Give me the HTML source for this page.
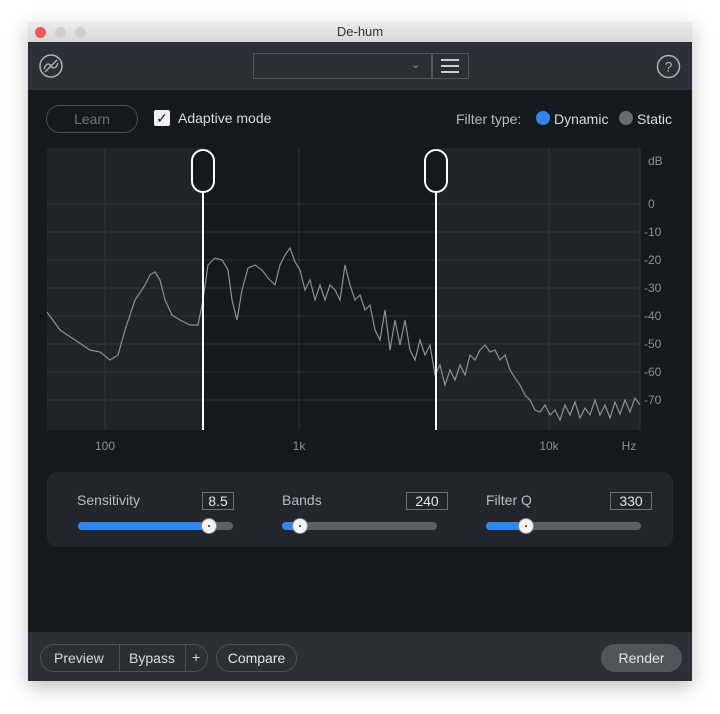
<!DOCTYPE html>
<html><head><meta charset="utf-8"><style>
body{margin:0;width:720px;height:714px;background:#fff;position:relative;font-family:"Liberation Sans",sans-serif;overflow:hidden}
.win{position:absolute;left:28px;top:22px;width:664px;height:659px;background:#15181c;box-shadow:0 6px 18px rgba(0,0,0,.25)}
.title{position:absolute;left:0;top:0;width:664px;height:20px;background:linear-gradient(#ececec,#d8d8d8);text-align:center;font-size:13px;line-height:20px;color:#333}
.dot{position:absolute;top:5px;width:11px;height:11px;border-radius:50%;background:#d0d0d0}
.tb{position:absolute;left:0;top:20px;width:664px;height:48px;background:#2b3038}
.abs{position:absolute}
.t{color:#d8dbe0;font-size:14px}
.bot{position:absolute;left:0;top:610px;width:664px;height:49px;background:#2b3038}
.pill{position:absolute;border:1px solid #4a5058;border-radius:14px;height:26px;color:#e0e3e7;font-size:14px;line-height:26px}
.box{position:absolute;border:1px solid #6a7078;color:#e6e6e6;font-size:14px;text-align:center;height:16px;line-height:16px;top:471px}
.track{position:absolute;height:8px;border-radius:4px;background:#5a6068;top:522px}
.fill{position:absolute;height:8px;border-radius:4px;background:#2f86ec;top:522px}
.knob{position:absolute;width:14px;height:14px;border-radius:50%;background:#f4f4f4;top:519px;box-shadow:0 0 0 1px #888}
.knob:after{content:"";position:absolute;left:6px;top:6px;width:2px;height:2px;background:#555}
</style></head><body>
<div class="win">
<div class="title">De-hum</div>
<div class="dot" style="left:7px;background:#ec5a52"></div><div class="dot" style="left:27px"></div><div class="dot" style="left:47px"></div>
<div class="tb"></div>
</div>
<svg class="abs" style="left:38px;top:53px" width="26" height="26" viewBox="0 0 26 26"><circle cx="13" cy="13" r="11" fill="none" stroke="#aeb3b9" stroke-width="1.5"/><path d="M6 16c2-6 5-6 7-3s5 3 7-3M7 19L19 7" fill="none" stroke="#aeb3b9" stroke-width="1.4"/></svg>
<div class="abs" style="left:253px;top:53px;width:178px;height:24px;border:1px solid #4e545c"></div>
<div class="abs" style="left:411px;top:58px;color:#8a9098;font-size:11px">⌄</div>
<div class="abs" style="left:431px;top:53px;width:36px;height:24px;border:1px solid #4e545c"></div>
<div class="abs" style="left:441px;top:59px;width:18px;height:2px;background:#ccc;box-shadow:0 6px 0 #ccc,0 12px 0 #ccc"></div>
<svg class="abs" style="left:656px;top:54px" width="25" height="25"><circle cx="12.5" cy="12.5" r="11" fill="none" stroke="#aeb3b9" stroke-width="1.5"/><text x="12.5" y="17.5" text-anchor="middle" font-size="14" fill="#aeb3b9" font-family="Liberation Sans">?</text></svg>
<div class="pill" style="left:46px;top:105px;width:90px;text-align:center;color:#6e747c;border-color:#454b53">Learn</div>
<div class="abs" style="left:154px;top:110px;width:16px;height:16px;background:#f0f0f0;border-radius:2px;color:#222;font-size:14px;line-height:16px;text-align:center">✓</div>
<div class="abs t" style="left:178px;top:110px">Adaptive mode</div>
<div class="abs t" style="left:456px;top:111px;color:#b8bcc2">Filter type:</div>
<div class="abs" style="left:536px;top:111px;width:14px;height:14px;border-radius:50%;background:#2f86ec"></div>
<div class="abs t" style="left:554px;top:111px">Dynamic</div>
<div class="abs" style="left:619px;top:111px;width:14px;height:14px;border-radius:50%;background:#666b72"></div>
<div class="abs t" style="left:637px;top:111px">Static</div>
<svg class="abs" style="left:0;top:0" width="720" height="714">
<rect x="47" y="148" width="593" height="282" fill="#20242a"/>
<rect x="203" y="148" width="233" height="282" fill="#15181d"/>
<g stroke="#30353c" stroke-width="1">
<line x1="47" y1="204" x2="640" y2="204"/><line x1="47" y1="232" x2="640" y2="232"/><line x1="47" y1="260" x2="640" y2="260"/><line x1="47" y1="288" x2="640" y2="288"/><line x1="47" y1="316" x2="640" y2="316"/><line x1="47" y1="344" x2="640" y2="344"/><line x1="47" y1="372" x2="640" y2="372"/><line x1="47" y1="400" x2="640" y2="400"/>
<line x1="105" y1="148" x2="105" y2="430"/><line x1="299" y1="148" x2="299" y2="430"/><line x1="549" y1="148" x2="549" y2="430"/><line x1="640" y1="148" x2="640" y2="430"/>
</g>
<polyline fill="none" stroke="#8a9098" stroke-width="1.2" points="47,312 60,330 75,340 90,350 100,352 110,360 118,355 125,330 135,300 145,285 150,275 155,272 160,280 165,300 172,315 180,320 190,325 198,325 203,300 208,265 215,258 222,260 228,270 232,300 237,320 242,290 248,268 255,265 262,270 268,278 275,285 280,265 285,255 290,248 295,262 300,270 305,290 310,280 315,300 320,285 325,300 330,285 335,290 340,300 345,265 350,285 355,300 360,295 365,310 370,305 375,330 380,340 385,310 390,350 395,320 400,345 405,320 410,350 415,360 420,340 425,355 430,345 435,375 440,365 445,385 450,370 455,380 460,365 465,375 470,355 475,360 480,350 485,345 490,352 495,350 500,360 505,355 510,370 515,378 520,385 525,395 530,400 535,410 540,412 545,405 550,415 555,410 560,420 565,405 570,415 575,402 580,418 585,408 590,415 595,400 600,415 605,405 610,418 615,402 620,414 625,400 630,412 635,398 640,405"/>
<line x1="203" y1="190" x2="203" y2="430" stroke="#fff" stroke-width="2"/><line x1="436" y1="190" x2="436" y2="430" stroke="#fff" stroke-width="2"/>
<rect x="192" y="150" width="22" height="42" rx="11" fill="#15181d" stroke="#fff" stroke-width="2"/>
<rect x="425" y="150" width="22" height="42" rx="11" fill="#15181d" stroke="#fff" stroke-width="2"/>
<g fill="#8a9098" font-size="12" font-family="Liberation Sans">
<text x="648" y="165">dB</text><text x="648" y="208">0</text><text x="644" y="236">-10</text><text x="644" y="264">-20</text><text x="644" y="292">-30</text><text x="644" y="320">-40</text><text x="644" y="348">-50</text><text x="644" y="376">-60</text><text x="644" y="404">-70</text>
<text x="105" y="450" text-anchor="middle">100</text><text x="299" y="450" text-anchor="middle">1k</text><text x="549" y="450" text-anchor="middle">10k</text><text x="629" y="450" text-anchor="middle">Hz</text>
</g>
<rect x="47" y="472" width="626" height="75" rx="10" fill="#22262c"/>
</svg>
<div class="abs t" style="left:77px;top:492px;color:#b8bcc2">Sensitivity</div>
<div class="abs t" style="left:282px;top:492px;color:#b8bcc2">Bands</div>
<div class="abs t" style="left:486px;top:492px;color:#b8bcc2">Filter Q</div>
<div class="box" style="left:202px;top:492px;width:30px">8.5</div>
<div class="box" style="left:406px;top:492px;width:40px">240</div>
<div class="box" style="left:610px;top:492px;width:40px">330</div>
<div class="track" style="left:78px;width:155px"></div><div class="fill" style="left:78px;width:132px"></div><div class="knob" style="left:202px"></div>
<div class="track" style="left:282px;width:155px"></div><div class="fill" style="left:282px;width:18px"></div><div class="knob" style="left:293px"></div>
<div class="track" style="left:486px;width:155px"></div><div class="fill" style="left:486px;width:40px"></div><div class="knob" style="left:519px"></div>
<div class="abs" style="left:28px;top:632px;width:664px;height:49px;background:#2b3038"></div>
<div class="pill" style="left:40px;top:644px;width:166px"></div>
<div class="abs t" style="left:54px;top:650px">Preview</div>
<div class="abs" style="left:119px;top:645px;width:1px;height:26px;background:#4a5058"></div>
<div class="abs t" style="left:129px;top:650px">Bypass</div>
<div class="abs" style="left:185px;top:645px;width:1px;height:26px;background:#4a5058"></div>
<div class="abs t" style="left:192px;top:649px">+</div>
<div class="pill" style="left:216px;top:644px;width:79px;text-align:center">Compare</div>
<div class="pill" style="left:601px;top:644px;width:79px;text-align:center;background:#4f555d;border-color:#4f555d">Render</div>
</body></html>
